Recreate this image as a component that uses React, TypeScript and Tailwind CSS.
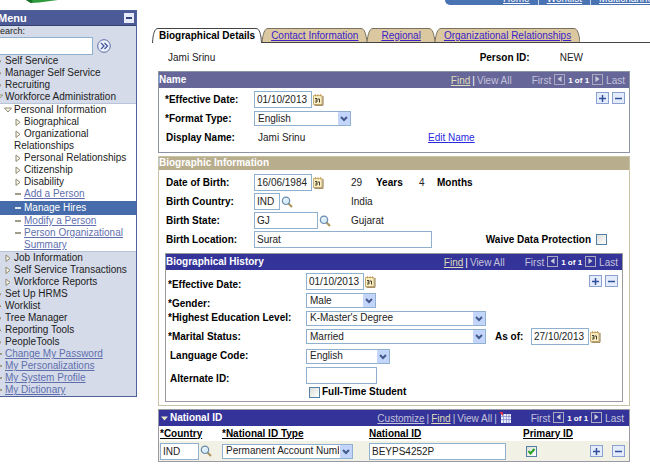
import { useState } from "react";
import type { ReactNode } from "react";

const FIELD =
  "h-[17px] border border-[#8fb0cf] bg-white pl-[2px] text-[10px] leading-3 text-[#222] outline-none";
const CHECK =
  "relative size-[11px] shrink-0 appearance-none border border-[#5580a5] bg-linear-to-br from-[#dcdcd7] to-white";

function CalendarIcon() {
  return (
    <svg viewBox="0 0 11 12" className="h-3 w-[11px]">
      <path d="M.5 1.500h8.500v9H.5z" fill="#fbf0c4" stroke="#c9ad72" />
      <path d="M10 2v9.300H1.500" fill="none" stroke="#8f7648" />
      <path d="M2.500 0v2.500M5 0v2.500M7.500 0v2.500" stroke="#c99c55" strokeWidth=".8" />
      <path d="M2 4.500h2v3.500H2M2.500 6.200h1.500M5 5h1.500v3.500" fill="none" stroke="#4a3f2c" />
    </svg>
  );
}

function SearchIcon() {
  return (
    <svg viewBox="0 0 12 12" className="size-3">
      <path d="M7.500 7.500l3.500 3.500" stroke="#a8925a" strokeWidth="2" />
      <circle cx="5" cy="4.800" r="3.700" fill="#d8ecfa" stroke="#6a8cab" strokeWidth="1.200" />
      <path d="M3.200 4.500a2 2 0 0 1 2-1.800" fill="none" stroke="#fff" />
    </svg>
  );
}

function IconButton({ label, children }: { label: string; children: ReactNode }) {
  return (
    <button type="button" aria-label={label} className="ml-px shrink-0">
      {children}
    </button>
  );
}

function RowButton({ kind }: { kind: "add" | "delete" }) {
  return (
    <button
      type="button"
      aria-label={kind === "add" ? "Add row" : "Delete row"}
      className="flex h-3 w-[13px] items-center justify-center border border-[#8aa0cf] bg-[#e4ecfb]"
    >
      <svg viewBox="0 0 7 7" className="size-[7px]">
        <path d="M0 3.500h7" stroke="#33509c" strokeWidth="1.500" />
        {kind === "add" && <path d="M3.500 0v7" stroke="#33509c" strokeWidth="1.500" />}
      </svg>
    </button>
  );
}

function RowButtons({ className }: { className: string }) {
  return (
    <div className={`flex ${className}`}>
      <RowButton kind="add" />
      <RowButton kind="delete" />
    </div>
  );
}

function Select({ id, value, width, label }: { id: string; value: string; width: string; label?: string }) {
  return (
    <div className={`relative h-[15px] shrink-0 ${width}`}>
      <select
        id={id}
        aria-label={label}
        className="h-full w-full appearance-none overflow-hidden border border-[#8fb0cf] bg-white pr-[13px] pl-[3px] text-[10px] leading-3 text-[#222] outline-none"
      >
        <option>{value}</option>
      </select>
      <svg viewBox="0 0 12 13" className="pointer-events-none absolute top-px right-px h-[13px] w-3">
        <rect width="12" height="13" rx="1" fill="#c3d5fa" />
        <path d="M3 5l3 3 3-3" fill="none" stroke="#43598c" strokeWidth="2" />
      </svg>
    </div>
  );
}

function Label({ id, width, children }: { id: string; width: string; children: ReactNode }) {
  return (
    <label htmlFor={id} className={`shrink-0 font-bold whitespace-nowrap text-black ${width}`}>
      {children}
    </label>
  );
}

function PageArrow({ dir }: { dir: "prev" | "next" }) {
  return (
    <button
      type="button"
      aria-label={dir === "prev" ? "Previous" : "Next"}
      className="mb-1 flex size-[11px] items-center justify-center border border-[#a9a9c0]"
    >
      <svg viewBox="0 0 5 6" className="h-[6px] w-[5px]">
        <path d={dir === "prev" ? "M4.500 0v6L.5 3z" : "M.5 0v6l4-3z"} fill="#c9c9d8" />
      </svg>
    </button>
  );
}

function Pager() {
  return (
    <div className="flex items-center gap-[3px] text-[#c4c4da]">
      <span>First</span>
      <PageArrow dir="prev" />
      <span className="text-[8px] font-bold text-white">1 of 1</span>
      <PageArrow dir="next" />
      <span>Last</span>
    </div>
  );
}

function ScrollNav() {
  return (
    <div className="flex items-center gap-5 pt-[2px]">
      <div className="flex gap-[2px] text-[#c4c4da]">
        <a href="#find" className="text-[#dedbb8] underline">Find</a>
        <span className="text-white">|</span>
        <span>View All</span>
      </div>
      <Pager />
    </div>
  );
}

function Tab({ children, pad }: { children: ReactNode; pad: string }) {
  return (
    <div className="flex h-[14px]">
      <svg viewBox="0 0 6 14" className="h-[14px] w-[6px]">
        <path d="M0 14C1 6 2.500 .5 6 .5V14z" fill="#dcc8a0" />
        <path d="M0 14C1 6 2.500 .5 6 .5" fill="none" stroke="#77705f" />
      </svg>
      <a
        href="#tab"
        className={`border-t border-[#77705f] bg-[#dcc8a0] leading-[13px] whitespace-nowrap text-[#3a22c8] underline ${pad}`}
      >
        {children}
      </a>
      <svg viewBox="0 0 6 14" className="h-[14px] w-[6px]">
        <path d="M0 .5C3.500 .5 5 6 6 14H0z" fill="#dcc8a0" />
        <path d="M0 .5C3.500 .5 5 6 6 14" fill="none" stroke="#77705f" />
      </svg>
    </div>
  );
}

function Tri({ open }: { open?: boolean }) {
  return (
    <svg viewBox="0 0 8 8" className="size-2 shrink-0">
      <path
        d={open ? "M.5 2h7L4 6z" : "M2 1v6.500l4-3.200z"}
        fill="#f8f6ec"
        stroke="#8f8b72"
      />
    </svg>
  );
}

function MenuRow({ children, open, pad }: { children: ReactNode; open?: boolean; pad: string }) {
  return (
    <li className={`flex items-center gap-[2px] whitespace-nowrap ${pad}`}>
      <Tri open={open} />
      <a href="#menu">{children}</a>
    </li>
  );
}

function MenuLink({ children, pad }: { children: ReactNode; pad: string }) {
  return (
    <li className={`flex items-start gap-[3px] ${pad}`}>
      <span className="mt-[5px] h-[2px] w-[6px] shrink-0 bg-[#a09c88]" />
      <a href="#menu" className="text-[#5f6fae] underline">{children}</a>
    </li>
  );
}

function Sidebar() {
  return (
    <nav className="-ml-2 w-[145px] shrink-0 self-start border border-[#4f629c] bg-[#d5dbe9] text-[#1c1c1c]">
      <div className="flex h-[15px] items-center justify-between border-b border-[#33416f] bg-[#4c5b97] pr-[2px] pl-[5px]">
        <h2 className="text-[11px] font-bold text-white">Menu</h2>
        <button
          type="button"
          aria-label="Minimize menu"
          className="flex size-[10px] items-center justify-center bg-[#e6ebf7]"
        >
          <span className="h-[2px] w-[6px] bg-[#33437f]" />
        </button>
      </div>
      <label htmlFor="menu-search" className="block pl-px text-[9px] leading-[11px]">Search:</label>
      <div className="flex h-[18px] items-center gap-1">
        <input id="menu-search" className="h-[18px] w-[100px] border border-[#8fb0cf] bg-white px-3 outline-none" />
        <button type="button" aria-label="Search">
          <svg viewBox="0 0 14 14" className="size-[14px]">
            <circle cx="7" cy="7" r="6.300" fill="#eef2fb" stroke="#5a6ca6" />
            <path d="M4 4l3 3-3 3M7.500 4l3 3-3 3" fill="none" stroke="#4557a0" strokeWidth="1.300" />
          </svg>
        </button>
      </div>
      <ul>
        <MenuRow pad="pl-[2px]">Self Service</MenuRow>
        <MenuRow pad="pl-[2px]">Manager Self Service</MenuRow>
        <MenuRow pad="pl-[2px]">Recruiting</MenuRow>
        <MenuRow pad="pl-[2px]" open>Workforce Administration</MenuRow>
        <li>
          <ul className="border-t border-b border-[#b9c3da] bg-white">
            <MenuRow pad="pl-[11px]" open>Personal Information</MenuRow>
            <MenuRow pad="pl-[21px]">Biographical</MenuRow>
            <MenuRow pad="pl-[21px]">Organizational</MenuRow>
            <li className="pl-[21px]"><a href="#menu">Relationships</a></li>
            <MenuRow pad="pl-[21px]">Personal Relationships</MenuRow>
            <MenuRow pad="pl-[21px]">Citizenship</MenuRow>
            <MenuRow pad="pl-[21px]">Disability</MenuRow>
            <MenuLink pad="pl-[22px]">Add a Person</MenuLink>
            <li className="mt-px flex h-[14px] items-center gap-[3px] bg-[#466cab] pl-[22px] text-white">
              <span className="h-[2px] w-[6px] bg-[#e4e6ec]" />
              <a href="#menu" aria-current="page">Manage Hires</a>
            </li>
            <MenuLink pad="pl-[22px]">Modify a Person</MenuLink>
            <MenuLink pad="pl-[22px]">Person Organizational Summary</MenuLink>
          </ul>
        </li>
        <MenuRow pad="pl-[11px]">Job Information</MenuRow>
        <MenuRow pad="pl-[11px]">Self Service Transactions</MenuRow>
        <MenuRow pad="pl-[11px]">Workforce Reports</MenuRow>
        <MenuRow pad="pl-[2px]">Set Up HRMS</MenuRow>
        <MenuRow pad="pl-[2px]">Worklist</MenuRow>
        <MenuRow pad="pl-[2px]">Tree Manager</MenuRow>
        <MenuRow pad="pl-[2px]">Reporting Tools</MenuRow>
        <MenuRow pad="pl-[2px]">PeopleTools</MenuRow>
        <MenuLink pad="pl-[3px]">Change My Password</MenuLink>
        <MenuLink pad="pl-[3px]">My Personalizations</MenuLink>
        <MenuLink pad="pl-[3px]">My System Profile</MenuLink>
        <MenuLink pad="pl-[3px]">My Dictionary</MenuLink>
      </ul>
    </nav>
  );
}

function DateField({ id, value }: { id: string; value: string }) {
  return (
    <>
      <input id={id} defaultValue={value} className={`w-[58px] shrink-0 ${FIELD}`} />
      <IconButton label="Choose a date"><CalendarIcon /></IconButton>
    </>
  );
}

function NameSection() {
  return (
    <section className="border border-[#8c94a3]">
      <div className="flex h-4 items-center justify-between bg-[#666699] pr-1">
        <h3 className="font-bold text-white">Name</h3>
        <ScrollNav />
      </div>
      <div className="pt-[2px] pr-1 pb-1 pl-[6px]">
        <div className="flex h-[19px] items-center">
          <Label id="name-date" width="w-[89px]">*Effective Date:</Label>
          <DateField id="name-date" value="01/10/2013" />
          <RowButtons className="mb-[3px] ml-auto gap-[3px]" />
        </div>
        <div className="flex h-[19px] items-center">
          <Label id="format" width="w-[89px]">*Format Type:</Label>
          <Select id="format" value="English" width="w-[97px]" />
        </div>
        <div className="flex h-5 items-center">
          <span className="w-[89px] pl-px font-bold text-black">Display Name:</span>
          <span className="w-[174px] pl-1">Jami Srinu</span>
          <a href="#edit" className="text-[#2a2ae0] underline">Edit Name</a>
        </div>
      </div>
    </section>
  );
}

function HistorySection() {
  return (
    <section className="mt-1 border border-[#9a9a9a]">
      <div className="flex h-4 items-center justify-between bg-[#333399] pr-1">
        <h3 className="font-bold text-white">Biographical History</h3>
        <ScrollNav />
      </div>
      <div className="pt-[2px] pr-1 pb-[2px] pl-[2px]">
        <div className="flex h-[19px] items-end">
          <Label id="h-date" width="w-[138px]">*Effective Date:</Label>
          <div className="flex h-full items-center"><DateField id="h-date" value="01/10/2013" /></div>
          <RowButtons className="mb-1 ml-auto gap-[3px]" />
        </div>
        <div className="flex h-[19px] items-end">
          <Label id="gender" width="w-[138px]">*Gender:</Label>
          <div className="h-full pt-[2px]"><Select id="gender" value="Male" width="w-[70px]" /></div>
        </div>
        <div className="flex h-[16px] items-center">
          <Label id="education" width="w-[138px]">*Highest Education Level:</Label>
          <Select id="education" value="K-Master's Degree" width="w-[180px]" />
        </div>
        <div className="flex h-[21px] items-center">
          <Label id="marital" width="w-[138px]">*Marital Status:</Label>
          <Select id="marital" value="Married" width="w-[180px]" />
          <div className="ml-[9px] flex items-center">
            <Label id="as-of" width="w-[36px]">As of:</Label>
            <DateField id="as-of" value="27/10/2013" />
          </div>
        </div>
        <div className="flex h-[18px] items-center pl-[2px]">
          <Label id="language" width="w-[136px]">Language Code:</Label>
          <Select id="language" value="English" width="w-[84px]" />
        </div>
        <div className="flex h-[20px] items-end pl-[2px]">
          <Label id="alternate" width="w-[136px]">Alternate ID:</Label>
          <div className="flex h-full items-center">
            <input id="alternate" className={`w-[71px] ${FIELD}`} />
          </div>
        </div>
        <div className="flex h-[14px] items-center gap-[2px] pl-[141px]">
          <input id="full-time" type="checkbox" className={CHECK} />
          <label htmlFor="full-time" className="font-bold text-black">Full-Time Student</label>
        </div>
      </div>
    </section>
  );
}

function BiographicSection() {
  return (
    <section className="mt-[3px] border border-[#c9c3a5]">
      <h3 className="h-[13px] bg-[#b8ae8e] leading-3 font-bold text-white">Biographic Information</h3>
      <div className="pt-[3px] pr-[6px] pb-[3px] pl-[6px]">
        <div className="flex h-[19px] items-center pl-px">
          <Label id="dob" width="w-[88px]">Date of Birth:</Label>
          <div className="flex w-[97px] items-center"><DateField id="dob" value="16/06/1984" /></div>
          <span className="w-[25px]">29</span>
          <span className="w-[43px] font-bold text-black">Years</span>
          <span className="w-[18px]">4</span>
          <span className="font-bold text-black">Months</span>
        </div>
        <div className="flex h-[19px] items-center pl-px">
          <Label id="country" width="w-[88px]">Birth Country:</Label>
          <div className="flex w-[97px] items-center">
            <input id="country" defaultValue="IND" className={`w-[26px] ${FIELD}`} />
            <IconButton label="Look up country"><SearchIcon /></IconButton>
          </div>
          <span>India</span>
        </div>
        <div className="flex h-[19px] items-center pl-px">
          <Label id="state" width="w-[88px]">Birth State:</Label>
          <div className="flex w-[97px] items-center">
            <input id="state" defaultValue="GJ" className={`w-[64px] ${FIELD}`} />
            <IconButton label="Look up state"><SearchIcon /></IconButton>
          </div>
          <span>Gujarat</span>
        </div>
        <div className="flex h-[19px] items-center pr-4 pl-px">
          <Label id="location" width="w-[88px]">Birth Location:</Label>
          <input id="location" defaultValue="Surat" className={`w-[178px] ${FIELD}`} />
          <div className="ml-auto flex items-center gap-[5px]">
            <label htmlFor="waive" className="font-bold text-black">Waive Data Protection</label>
            <input id="waive" type="checkbox" className={CHECK} />
          </div>
        </div>
        <HistorySection />
      </div>
    </section>
  );
}

function NationalSection() {
  const [primary, setPrimary] = useState(true);
  return (
    <section className="mt-[3px] border border-[#9a9aa6]">
      <div className="flex h-4 items-center justify-between bg-[#333399] pr-[5px] pl-[2px]">
        <h3 className="flex items-center gap-[2px] font-bold text-white">
          <svg viewBox="0 0 7 5" className="h-[5px] w-[7px]"><path d="M0 .5h7L3.500 4.500z" fill="#e8e6c8" /></svg>
          National ID
        </h3>
        <div className="flex items-center gap-5 pt-[2px]">
          <div className="flex items-center gap-[2px] text-[#c4c4da]">
            <a href="#customize" className="underline">Customize</a>
            <span>|</span>
            <a href="#find" className="text-[#dedbb8] underline">Find</a>
            <span>|</span>
            <span>View All</span>
            <span>|</span>
            <button type="button" aria-label="Download" className="mb-1">
              <svg viewBox="0 0 12 11" className="h-[11px] w-3">
                <path d="M2 2h10v9H2z" fill="#e9ecfa" />
                <path d="M2 4.500h10M2 7.500h10M4.500 2v9M7.500 2v9M10 2v9" stroke="#8088cc" strokeWidth=".7" />
                <path d="M0 0h4v4z" fill="#d8324a" />
              </svg>
            </button>
          </div>
          <Pager />
        </div>
      </div>
      <table className="w-full table-fixed text-left">
        <thead>
          <tr className="h-[15px] text-black underline">
            <th className="w-[63px] pl-px">*Country</th>
            <th className="w-[147px]">*National ID Type</th>
            <th className="w-[154px]">National ID</th>
            <th className="w-[56px]">Primary ID</th>
            <th />
          </tr>
        </thead>
        <tbody>
          <tr className="h-5 bg-[#f2f1e6]">
            <td className="pl-px">
              <div className="flex items-center">
                <input aria-label="Country" defaultValue="IND" className={`w-[39px] ${FIELD}`} />
                <IconButton label="Look up country"><SearchIcon /></IconButton>
              </div>
            </td>
            <td><Select id="id-type" label="National ID Type" value="Permanent Account Number" width="w-[131px]" /></td>
            <td>
              <input aria-label="National ID" autoFocus defaultValue="BEYPS4252P" className={`block w-[137px] ${FIELD}`} />
            </td>
            <td>
              <div className="relative ml-[3px] size-[11px]">
                <input
                  type="checkbox"
                  aria-label="Primary ID"
                  checked={primary}
                  onChange={() => setPrimary(!primary)}
                  className={`block ${CHECK}`}
                />
                {primary && (
                  <svg viewBox="0 0 11 11" className="pointer-events-none absolute inset-0 size-[11px]">
                    <path d="M2.500 5l2 2.500 4-4.500" fill="none" stroke="#21a121" strokeWidth="2" />
                  </svg>
                )}
              </div>
            </td>
            <td><RowButtons className="justify-end gap-[9px] pr-1" /></td>
          </tr>
        </tbody>
      </table>
    </section>
  );
}

export default function App() {
  return (
    <div
      className="min-h-screen overflow-hidden bg-white text-[10px] leading-3 text-[#222]"
      style={{ fontFamily: '"Liberation Sans", Arial, sans-serif' }}
    >
      <header className="flex h-[10px] items-start justify-between overflow-hidden">
        <svg viewBox="0 0 36 4" className="ml-[25px] h-1 w-9">
          <path d="M1 0h32L14 2.500 6 3z" fill="#2e9a3c" />
          <path d="M1 0l5 3 2-1.500L6 0z" fill="#146b24" />
        </svg>
        <div className="flex h-[5px] w-[205px] gap-2 overflow-hidden rounded-bl-xl bg-[#4a73b4] pl-[58px] whitespace-nowrap text-white">
          <a href="#home" className="-mt-[7px] underline">Home</a>
          <span className="h-[5px] w-px shrink-0 bg-[#c9d6ea]" />
          <a href="#worklist" className="-mt-[7px] underline">Worklist</a>
          <span className="h-[5px] w-px shrink-0 bg-[#c9d6ea]" />
          <a href="#console" className="-mt-[7px] underline">Multichannel Console</a>
        </div>
      </header>
      <div className="flex">
        <Sidebar />
        <main className="min-w-0 flex-1 pt-[18px]">
          <div className="flex pl-[15px]">
            <div className="flex h-[15px]">
              <svg viewBox="0 0 6 15" className="h-[15px] w-[6px]">
                <path d="M.5 15C1 6 2.500 .5 6 .5" fill="none" stroke="#444" />
              </svg>
              <a
                href="#tab"
                aria-current="page"
                className="border-t border-[#444] px-px leading-[13px] font-bold whitespace-nowrap text-black"
              >
                Biographical Details
              </a>
              <svg viewBox="0 0 6 15" className="h-[15px] w-[6px]">
                <path d="M0 .5C3.500 .5 5 6 5.500 15" fill="none" stroke="#444" />
              </svg>
            </div>
            <div className="flex flex-1 border-b border-[#444]">
              <Tab pad="px-[3px]">Contact Information</Tab>
              <Tab pad="px-2">Regional</Tab>
              <Tab pad="px-[3px]">Organizational Relationships</Tab>
            </div>
          </div>
          <div className="mr-5 ml-[21px]">
            <div className="flex h-7 items-center pt-[2px] pr-[47px] pl-[10px] text-[#222]">
              <span>Jami Srinu</span>
              <span className="ml-auto font-bold text-black">Person ID:</span>
              <span className="ml-[30px]">NEW</span>
            </div>
            <NameSection />
            <BiographicSection />
            <NationalSection />
          </div>
        </main>
      </div>
    </div>
  );
}
